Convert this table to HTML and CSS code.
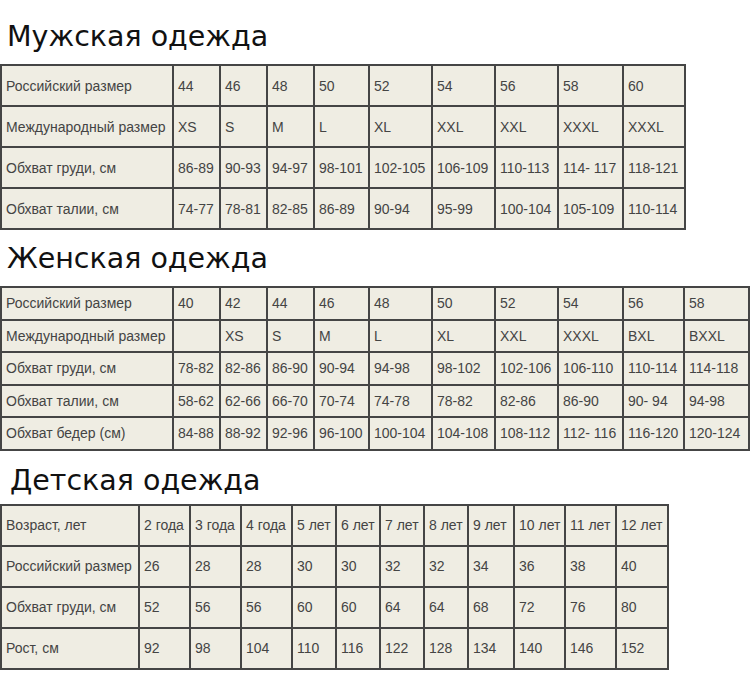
FILE: index.html
```html
<!DOCTYPE html>
<html lang="ru">
<head>
<meta charset="utf-8">
<title>Таблица размеров</title>
<link rel="stylesheet" href="styles.css">
</head>
<body>
<section class="block block-men">
  <h2 class="title">Мужская одежда</h2>
  <table class="sizes sizes-men">
    <colgroup>
      <col class="c172"><col class="c47"><col class="c47"><col class="c47"><col class="c55"><col class="c63"><col class="c63"><col class="c63"><col class="c65"><col class="c62">
    </colgroup>
    <tr><td>Российский размер</td><td>44</td><td>46</td><td>48</td><td>50</td><td>52</td><td>54</td><td>56</td><td>58</td><td>60</td></tr>
    <tr><td>Международный размер</td><td>XS</td><td>S</td><td>M</td><td>L</td><td>XL</td><td>XXL</td><td>XXL</td><td>XXXL</td><td>XXXL</td></tr>
    <tr><td>Обхват груди, см</td><td>86-89</td><td>90-93</td><td>94-97</td><td>98-101</td><td>102-105</td><td>106-109</td><td>110-113</td><td>114- 117</td><td>118-121</td></tr>
    <tr><td>Обхват талии, см</td><td>74-77</td><td>78-81</td><td>82-85</td><td>86-89</td><td>90-94</td><td>95-99</td><td>100-104</td><td>105-109</td><td>110-114</td></tr>
  </table>
</section>
<section class="block block-women">
  <h2 class="title">Женская одежда</h2>
  <table class="sizes sizes-women">
    <colgroup>
      <col class="c172"><col class="c47"><col class="c47"><col class="c47"><col class="c55"><col class="c63"><col class="c63"><col class="c63"><col class="c65"><col class="c61"><col class="c65">
    </colgroup>
    <tr><td>Российский размер</td><td>40</td><td>42</td><td>44</td><td>46</td><td>48</td><td>50</td><td>52</td><td>54</td><td>56</td><td>58</td></tr>
    <tr><td>Международный размер</td><td></td><td>XS</td><td>S</td><td>M</td><td>L</td><td>XL</td><td>XXL</td><td>XXXL</td><td>BXL</td><td>BXXL</td></tr>
    <tr><td>Обхват груди, см</td><td>78-82</td><td>82-86</td><td>86-90</td><td>90-94</td><td>94-98</td><td>98-102</td><td>102-106</td><td>106-110</td><td>110-114</td><td>114-118</td></tr>
    <tr><td>Обхват талии, см</td><td>58-62</td><td>62-66</td><td>66-70</td><td>70-74</td><td>74-78</td><td>78-82</td><td>82-86</td><td>86-90</td><td>90- 94</td><td>94-98</td></tr>
    <tr><td>Обхват бедер (см)</td><td>84-88</td><td>88-92</td><td>92-96</td><td>96-100</td><td>100-104</td><td>104-108</td><td>108-112</td><td>112- 116</td><td>116-120</td><td>120-124</td></tr>
  </table>
</section>
<section class="block block-kids">
  <h2 class="title title-kids">Детская одежда</h2>
  <table class="sizes sizes-kids">
    <colgroup>
      <col class="c138"><col class="c51"><col class="c51"><col class="c51"><col class="c44"><col class="c44"><col class="c44"><col class="c44"><col class="c46"><col class="c51"><col class="c51"><col class="c52">
    </colgroup>
    <tr><td>Возраст, лет</td><td>2 года</td><td>3 года</td><td>4 года</td><td>5 лет</td><td>6 лет</td><td>7 лет</td><td>8 лет</td><td>9 лет</td><td>10 лет</td><td>11 лет</td><td>12 лет</td></tr>
    <tr><td>Российский размер</td><td>26</td><td>28</td><td>28</td><td>30</td><td>30</td><td>32</td><td>32</td><td>34</td><td>36</td><td>38</td><td>40</td></tr>
    <tr><td>Обхват груди, см</td><td>52</td><td>56</td><td>56</td><td>60</td><td>60</td><td>64</td><td>64</td><td>68</td><td>72</td><td>76</td><td>80</td></tr>
    <tr><td>Рост, см</td><td>92</td><td>98</td><td>104</td><td>110</td><td>116</td><td>122</td><td>128</td><td>134</td><td>140</td><td>146</td><td>152</td></tr>
  </table>
</section>
</body>
</html>
```
FILE: styles.css
```css
html, body {
  margin: 0;
  padding: 0;
  background: #ffffff;
}

body {
  font-family: "Liberation Sans", Arial, sans-serif;
}

.block {
  display: flex;
  flex-direction: column;
  align-items: flex-start;
}

.title {
  margin: 0;
  padding-left: 7px;
  font-family: "DejaVu Sans", Verdana, sans-serif;
  font-weight: normal;
  font-size: 28.5px;
  line-height: 32px;
  color: #111111;
}

.block-men .title {
  margin-top: 21px;
  margin-bottom: 11px;
}

.block-women .title {
  margin-top: 13px;
  margin-bottom: 11px;
}

.block-kids .title {
  margin-top: 14px;
  margin-bottom: 7px;
  padding-left: 10px;
}

.sizes {
  border-collapse: collapse;
  table-layout: fixed;
  background: #efede3;
  border: 2px solid #454545;
}

.sizes td {
  border: 2px solid #454545;
  padding: 0 0 0 4px;
  font-size: 14px;
  color: #444444;
  white-space: nowrap;
  overflow: hidden;
  vertical-align: middle;
}

.sizes-men { width: 685px; }
.sizes-men td { height: 39px; }

.sizes-women { width: 748px; }
.sizes-women td { height: 30.5px; }

.sizes-kids { width: 667px; }
.sizes-kids td { height: 39px; }

.c172 { width: 172px; }
.c138 { width: 138px; }
.c65 { width: 65px; }
.c63 { width: 63px; }
.c62 { width: 62px; }
.c61 { width: 61px; }
.c55 { width: 55px; }
.c52 { width: 52px; }
.c51 { width: 51px; }
.c47 { width: 47px; }
.c46 { width: 46px; }
.c44 { width: 44px; }
```
